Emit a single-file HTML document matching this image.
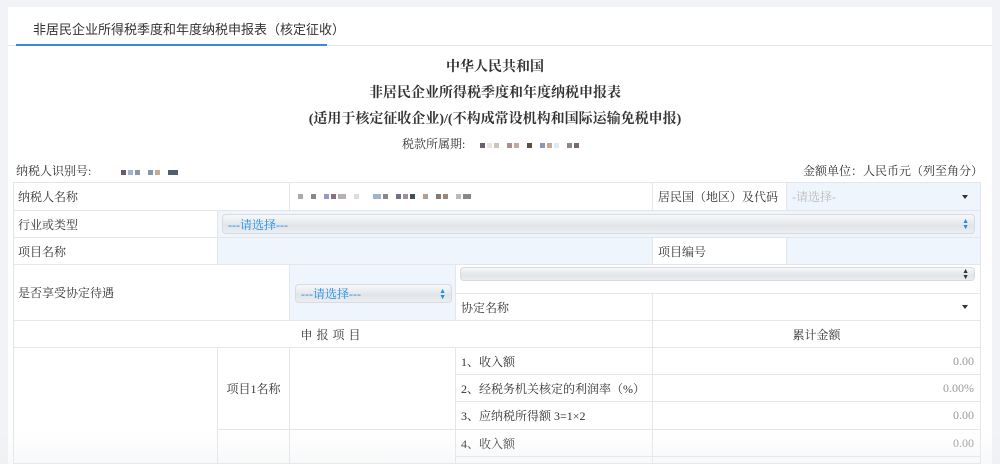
<!DOCTYPE html>
<html style="width:1000px;height:464px;overflow:hidden"><head><meta charset="utf-8"><style>
*{margin:0;padding:0;box-sizing:border-box}
body{width:1000px;height:464px;background:#f1f3f6;font-family:"Liberation Serif","Noto Serif CJK SC","Noto Sans CJK SC",serif;color:#333;font-size:12px;position:relative;overflow:hidden}
.panel{position:absolute;left:8px;top:7px;width:984px;height:457px;background:#fff}
.a{position:absolute}
.c{position:absolute;border-right:1px solid #e4e6e9;border-bottom:1px solid #e4e6e9;display:flex;align-items:center;padding-left:5px;font-size:12px}
.lb{background:#eef5fd}
.sel{position:absolute;border-radius:4px;background:linear-gradient(#f7f8f9,#e1e4e8 60%,#eceef1);border:1px solid #d8dbe0;color:#1e8fe6;font-size:12px;display:flex;align-items:center;padding-left:5px}
.ar{position:absolute;right:5px;top:50%;transform:translateY(-50%);font-size:7px;line-height:6px;color:#1e8fe6;text-align:center}
.tri{position:absolute;right:12px;top:50%;margin-top:-2px;width:0;height:0;border-left:3px solid transparent;border-right:3px solid transparent;border-top:4px solid #333}
.px{display:inline-block;width:5px;height:5px;margin-right:2px}
.n{justify-content:flex-end;padding-right:6px;color:#999}
</style></head><body>
<div class="panel"></div>
<div class="a" style="left:33px;top:19px;font-size:13px;font-family:'Liberation Sans','Noto Sans CJK SC',sans-serif">非居民企业所得税季度和年度纳税申报表（核定征收）</div>
<div class="a" style="left:8px;top:45px;width:984px;height:1px;background:#e4e6ea"></div>
<div class="a" style="left:16px;top:44px;width:311px;height:2px;background:#3b87e0"></div>
<div class="a" style="left:0;width:990px;top:56px;text-align:center;font-size:14px;font-weight:bold">中华人民共和国</div>
<div class="a" style="left:0;width:990px;top:82px;text-align:center;font-size:14px;font-weight:bold">非居民企业所得税季度和年度纳税申报表</div>
<div class="a" style="left:0;width:990px;top:108px;text-align:center;font-size:14px;font-weight:bold">(适用于核定征收企业)/(不构成常设机构和国际运输免税申报)</div>
<div class="a" style="left:402px;top:135px;font-size:12px">税款所属期: <span style="margin-left:12px"></span><span class="px" style="background:#6a5f6a"></span><span class="px" style="background:#e8e4d8"></span><span class="px" style="background:#c8c8be;margin-right:8px"></span><span class="px" style="background:#a89090"></span><span class="px" style="background:#c8a898;margin-right:8px"></span><span class="px" style="background:#5a4e48;margin-right:8px"></span><span class="px" style="background:#8898b0"></span><span class="px" style="background:#c8a890"></span><span class="px" style="background:#dceaf5;margin-right:8px"></span><span class="px" style="background:#8c8888"></span><span class="px" style="background:#7a6870"></span></div>
<div class="a" style="left:16px;top:162px">纳税人识别号:<span style="margin-left:30px"></span><span class="px" style="background:#6a5a70"></span><span class="px" style="background:#a0b4d0"></span><span class="px" style="background:#8898a8;margin-right:8px"></span><span class="px" style="background:#8098a8"></span><span class="px" style="background:#c8a898;margin-right:8px"></span><span class="px" style="background:#506070;width:10px"></span></div>
<div class="a" style="left:803px;top:162px">金额单位：人民币元（列至角分）</div>
<div class="a" style="left:13px;top:182px;width:968px;height:1px;background:#e4e6e9"></div>
<div class="a" style="left:13px;top:182px;width:1px;height:282px;background:#e4e6e9"></div>
<div class="c" style="left:13px;top:183px;width:277px;height:28px">纳税人名称</div>
<div class="c" style="left:290px;top:183px;width:363px;height:28px;padding-left:8px"><span class="px" style="background:#aaa;margin-right:8px"></span><span class="px" style="background:#888;margin-right:8px"></span><span class="px" style="background:#9898c8"></span><span class="px" style="background:#8a7078"></span><span class="px" style="background:#b8b0b8;width:8px;margin-right:8px"></span><span class="px" style="background:#ddd;margin-right:14px"></span><span class="px" style="background:#a0b4d0;width:8px"></span><span class="px" style="background:#888;margin-right:8px"></span><span class="px" style="background:#707088"></span><span class="px" style="background:#a09098"></span><span class="px" style="background:#405058;margin-right:8px"></span><span class="px" style="background:#b0a090;margin-right:8px"></span><span class="px" style="background:#8a7870"></span><span class="px" style="background:#988878;margin-right:8px"></span><span class="px" style="background:#bbb"></span><span class="px" style="background:#888;width:8px"></span></div>
<div class="c" style="left:653px;top:183px;width:134px;height:28px">居民国（地区）及代码</div>
<div class="c lb" style="left:787px;top:183px;width:194px;height:28px;color:#bbb">-请选择-<div class="tri"></div></div>
<div class="c" style="left:13px;top:211px;width:205px;height:27px">行业或类型</div>
<div class="c lb" style="left:218px;top:211px;width:763px;height:27px"></div>
<div class="sel" style="left:222px;top:214px;width:753px;height:20px">---请选择---<div class="ar">▲<br>▼</div></div>
<div class="c" style="left:13px;top:238px;width:205px;height:27px">项目名称</div>
<div class="c lb" style="left:218px;top:238px;width:435px;height:27px"></div>
<div class="c" style="left:653px;top:238px;width:134px;height:27px">项目编号</div>
<div class="c lb" style="left:787px;top:238px;width:194px;height:27px"></div>
<div class="c" style="left:13px;top:265px;width:277px;height:56px">是否享受协定待遇</div>
<div class="c lb" style="left:290px;top:265px;width:166px;height:56px"></div>
<div class="sel" style="left:295px;top:284px;width:157px;height:19px">---请选择---<div class="ar">▲<br>▼</div></div>
<div class="c" style="left:456px;top:265px;width:525px;height:29px"></div>
<div class="sel" style="left:460px;top:267px;width:515px;height:14px;color:#333"><div class="ar" style="color:#333">▲<br>▼</div></div>
<div class="c" style="left:456px;top:294px;width:197px;height:27px">协定名称</div>
<div class="c" style="left:653px;top:294px;width:328px;height:27px"><div class="tri"></div></div>
<div class="c" style="left:13px;top:321px;width:640px;height:27px;justify-content:center;padding:0;letter-spacing:4px">申报项目</div>
<div class="c" style="left:653px;top:321px;width:328px;height:27px;justify-content:center;padding:0">累计金额</div>
<div class="c" style="left:13px;top:348px;width:205px;height:116px"></div>
<div class="c" style="left:218px;top:348px;width:72px;height:82px;justify-content:center;padding:0">项目1名称</div>
<div class="c" style="left:290px;top:348px;width:166px;height:82px"></div>
<div class="c" style="left:218px;top:430px;width:72px;height:34px"></div>
<div class="c" style="left:290px;top:430px;width:166px;height:34px"></div>
<div class="c" style="left:456px;top:348px;width:197px;height:27px">1、收入额</div>
<div class="c n" style="left:653px;top:348px;width:328px;height:27px">0.00</div>
<div class="c" style="left:456px;top:375px;width:197px;height:27px">2、经税务机关核定的利润率（%）</div>
<div class="c n" style="left:653px;top:375px;width:328px;height:27px">0.00%</div>
<div class="c" style="left:456px;top:402px;width:197px;height:28px">3、应纳税所得额 3=1×2</div>
<div class="c n" style="left:653px;top:402px;width:328px;height:28px">0.00</div>
<div class="c" style="left:456px;top:430px;width:197px;height:27px">4、收入额</div>
<div class="c n" style="left:653px;top:430px;width:328px;height:27px">0.00</div>
<div class="c" style="left:456px;top:457px;width:197px;height:7px"></div>
<div class="c" style="left:653px;top:457px;width:328px;height:7px"></div>
<div class="a" style="left:0;top:430px;width:1000px;height:34px;background:linear-gradient(rgba(240,241,243,0),rgba(235,237,240,.35))"></div>
</body></html>
